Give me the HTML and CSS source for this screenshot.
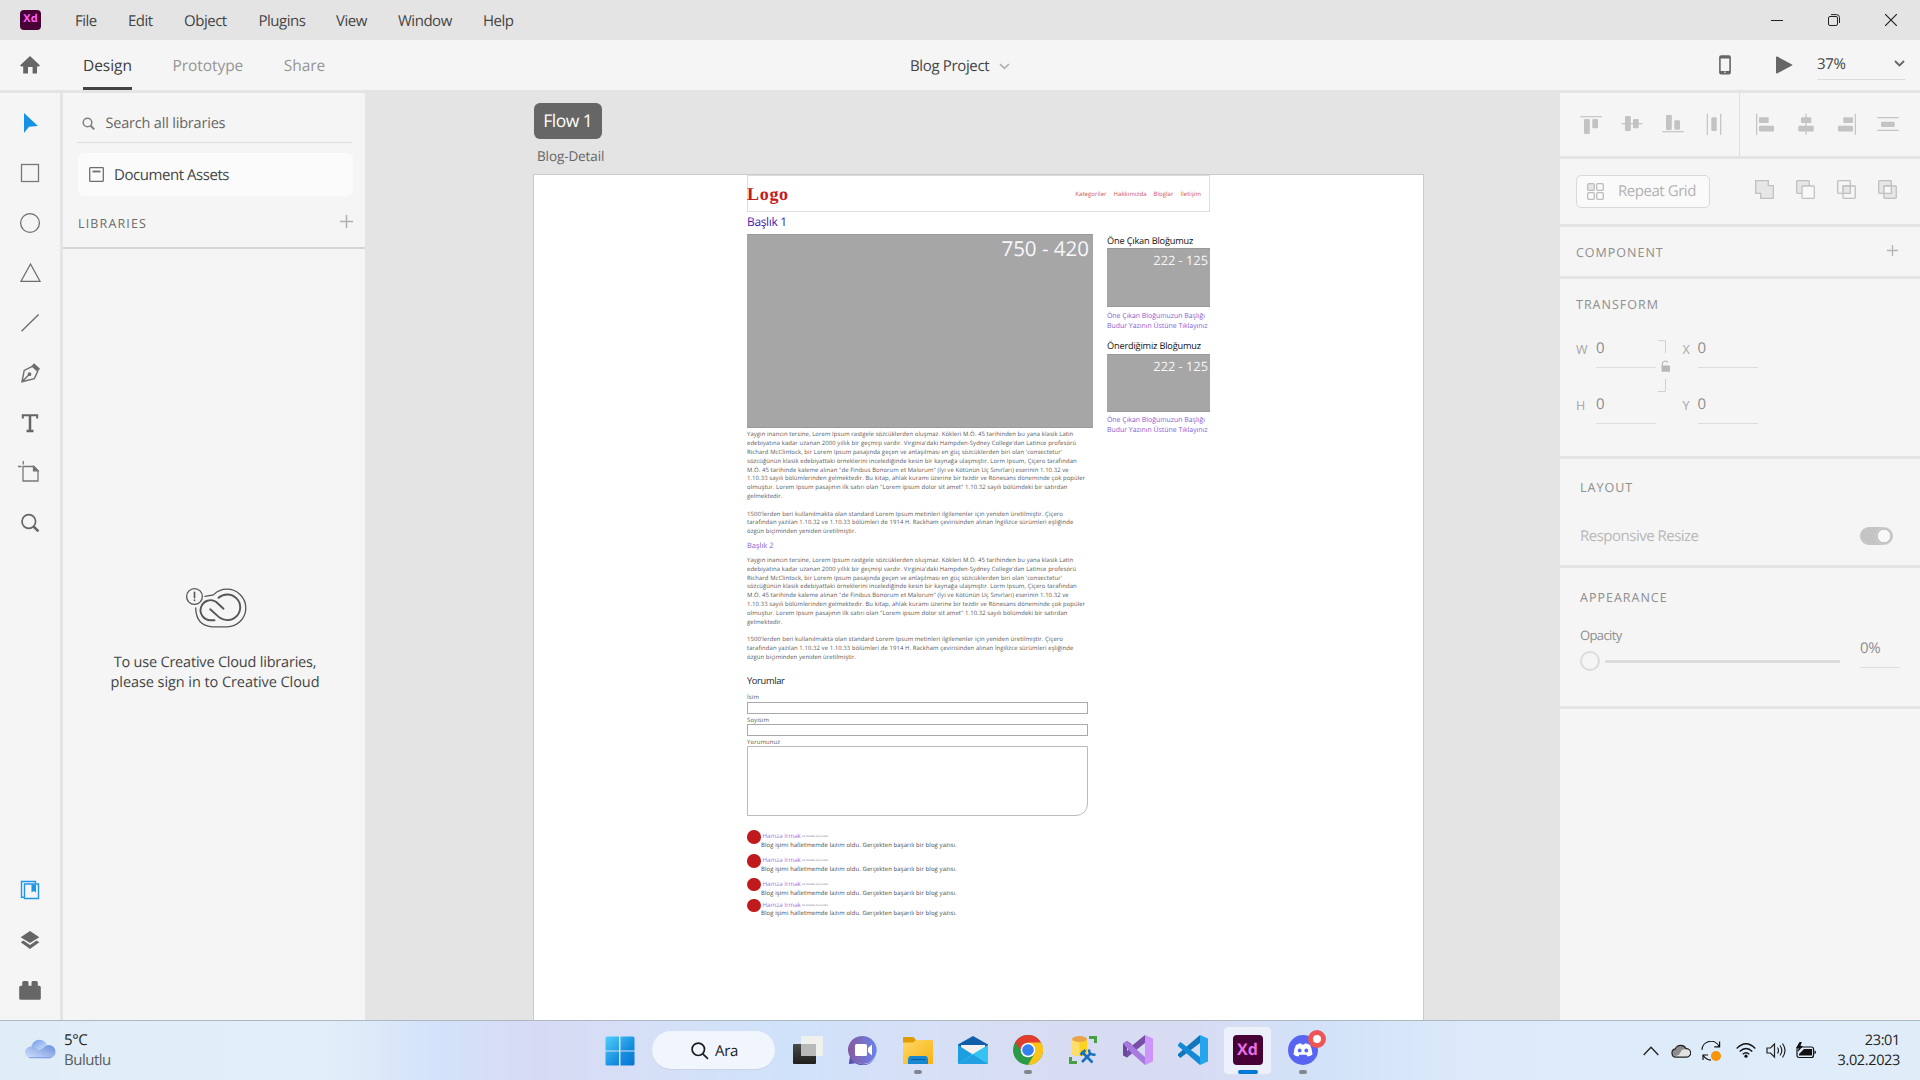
FILE: index.html
```html
<!DOCTYPE html>
<html lang="tr">
<head>
<meta charset="utf-8">
<title>Blog Project</title>
<link rel="stylesheet" href="styles.css">
</head>
<body>
<div class="app">
  <header class="titlebar">
    <div class="xd-logo">Xd</div>
    <nav class="menu"><span>File</span><span>Edit</span><span>Object</span><span>Plugins</span><span>View</span><span>Window</span><span>Help</span></nav>
    <div class="window-buttons">
      <svg width="12" height="12" viewBox="0 0 12 12"><path d="M0 6.500h12" stroke="#222" fill="none"/></svg>
      <svg width="12" height="12" viewBox="0 0 12 12" fill="none" stroke="#222"><rect x=".5" y="2.500" width="9" height="9" rx="1.500"/><path d="M3 .6h5.500a3 3 0 0 1 3 3V9"/></svg>
      <svg width="12" height="12" viewBox="0 0 12 12"><path d="M0 0l12 12M12 0L0 12" stroke="#222" stroke-width="1.200"/></svg>
    </div>
  </header>

  <div class="toolbar">
    <svg class="home" width="20" height="18" viewBox="0 0 20 18"><path d="M10 0l10 9.600-1.300 1H17V17.400h-4.400V11H8v6.400H3.200v-6.800H1.300L0 9.600z" fill="#666"/></svg>
    <div class="tabs"><span class="tab active">Design</span><span class="tab">Prototype</span><span class="tab">Share</span></div>
    <div class="project">Blog Project<svg width="11" height="7" viewBox="0 0 11 7"><path d="M1 1l4.500 4.400L10 1" fill="none" stroke="#b0b0b0" stroke-width="1.700"/></svg></div>
    <div class="preview">
      <svg width="12" height="20" viewBox="0 0 12 20"><rect x=".9" y="1" width="10.200" height="17.800" rx="1.200" fill="none" stroke="#666" stroke-width="1.600"/><path d="M1 2.200h10M1 17.300h10" stroke="#666" stroke-width="2.600"/><circle cx="6" cy="17.300" r=".8" fill="#f5f5f5"/></svg>
      <svg width="17" height="18" viewBox="0 0 17 18"><path d="M0 1.500Q0 0 1.400.6L16 8.500Q17 9 16 9.600L1.400 17.300Q0 18 0 16.600z" fill="#666"/></svg>
      <div class="zoom"><span>37%</span><svg width="11" height="7" viewBox="0 0 11 7"><path d="M1 1l4.500 4.400L10 1" fill="none" stroke="#666" stroke-width="1.900"/></svg></div>
    </div>
  </div>

  <main class="workspace">
    <aside class="tools">
      <div class="tool"><svg viewBox="0 0 30 30"><path d="M9 5v20l5-6.200 9-.8z" fill="#1592e6"/></svg></div>
      <div class="tool"><svg viewBox="0 0 30 30" fill="none" stroke="#777" stroke-width="1.300"><rect x="6.500" y="6.500" width="17" height="17"/></svg></div>
      <div class="tool"><svg viewBox="0 0 30 30" fill="none" stroke="#6e6e6e" stroke-width="1.300"><circle cx="15" cy="15" r="9.400"/></svg></div>
      <div class="tool"><svg viewBox="0 0 30 30" fill="none" stroke="#6e6e6e" stroke-width="1.300"><path d="M15.500 6L25 23.300H6z"/></svg></div>
      <div class="tool"><svg viewBox="0 0 30 30" fill="none" stroke="#6e6e6e" stroke-width="1.400"><path d="M6.500 23.300L23.600 6.500"/></svg></div>
      <div class="tool"><svg viewBox="0 0 30 30" fill="none" stroke="#6e6e6e" stroke-width="1.400"><path d="M7 23.700l2.200-11.200 8.200-4.200 5.300 5-3.400 7.300zL14.500 16.200"/><circle cx="14.500" cy="16.200" r="1.200" fill="#6e6e6e"/><path d="M17.800 6.600l6 5.600" stroke-width="3.800"/></svg></div>
      <div class="tool"><svg viewBox="0 0 30 30" fill="none" stroke="#666"><path d="M7.800 10.500V7.300h14.400v3.200" stroke-width="2"/><path d="M15 7v16M11.500 23.100h7" stroke-width="2.500"/></svg></div>
      <div class="tool"><svg class="up" viewBox="0 0 30 30" fill="none" stroke="#777" stroke-width="1.300"><path d="M8 9.500h11l4 4V24H8zM3 9.500h3.500M8.300 4v3.500"/><path d="M18.500 9.500v4.300H23z" fill="#666"/></svg></div>
      <div class="tool"><svg viewBox="0 0 30 30" fill="none" stroke="#666"><circle cx="13.800" cy="13.500" r="6.800" stroke-width="1.700"/><path d="M18.500 18.500l5 4.800" stroke-width="2.500"/></svg></div>
      <div class="tool first-bottom"><svg viewBox="0 0 30 30" fill="none" stroke="#1e96e8" stroke-width="1.400"><path d="M20.500 8.500v-2h-14v15.800h3"/><path d="M9.500 9h14v14.500h-14z"/><path d="M16.500 9.500h4.500v8l-2.200-1.500-2.300 1.500z" fill="#1e96e8" stroke="none"/></svg></div>
      <div class="tool"><svg viewBox="0 0 30 30" fill="#666"><path d="M15 6l9.300 6.200L15 18 5.700 12.200zM5.700 17.200L8.400 15.600 15 19.900l6.600-4.300 2.700 1.600L15 24z"/></svg></div>
      <div class="tool"><svg viewBox="0 0 30 30" fill="#666"><path d="M4.200 12.200q0-1.500 1.500-1.500h1.500V7.500q0-1.500 1.500-1.500h3.500q1.300 0 1.300 1.500v3.200h3V7.500q0-1.500 1.300-1.500h3.500q1.500 0 1.500 1.500v3.200h1.500q1.500 0 1.500 1.500v11q0 1.500-1.500 1.500H5.700q-1.500 0-1.500-1.500z"/></svg></div>
    </aside>

    <aside class="libraries">
      <div class="search"><svg width="13" height="13" viewBox="0 0 13 13" fill="none" stroke="#808080"><circle cx="5.500" cy="5.500" r="4.300" stroke-width="1.500"/><path d="M8.700 8.800l3.500 3.600" stroke-width="2"/></svg><span>Search all libraries</span></div>
      <div class="doc-assets"><svg width="15" height="15" viewBox="0 0 15 15" fill="none" stroke="#6e6e6e" stroke-width="1.300"><rect x=".7" y=".7" width="13.600" height="13.600" rx=".5"/><path d="M3.500 4.500h8" stroke-width="1.800"/></svg><span>Document Assets</span></div>
      <div class="lib-head"><span>LIBRARIES</span><svg width="13" height="13" viewBox="0 0 13 13"><path d="M6.500 0v13M0 6.500h13" stroke="#b0b0b0" stroke-width="1.500"/></svg></div>
      <div class="sign-in">
        <svg width="62" height="42" viewBox="0 0 62 42" fill="none" stroke="#555" stroke-linecap="round"><circle cx="9.500" cy="9.500" r="7.900" stroke-width="1.300"/><path d="M9.500 5.200v5.600M9.500 13.100v.4" stroke-width="1.600"/><path d="M20 9.300l8.500-1.400Q34 2.200 42 2.200A18.800 18.800 0 0 1 42 39.800H27Q11 38.500 10.700 21" stroke-width="1.300"/><path d="M38.500 21.700L31.300 15A10 10 0 1 0 25.500 33.200H29.500M25.200 22.300l9.300 8.300A13 12.800 0 1 0 33.500 10.800" stroke-width="1.900"/></svg>
        <p><span>To use Creative Cloud libraries,</span><br>please sign in to Creative Cloud</p>
      </div>
    </aside>

    <section class="canvas">
      <div class="flow-tag">Flow 1</div>
      <div class="board-name">Blog-Detail</div>
      <article class="board">
        <div class="page">
          <header class="page-head"><b>Logo</b><nav><span>Kategoriler</span><span>Hakkımızda</span><span>Bloglar</span><span>İletişim</span></nav></header>
          <div class="columns">
            <div class="post">
              <h1>Başlık 1</h1>
              <div class="hero">750 - 420</div>
              <p class="copy">Yaygın inancın tersine, Lorem Ipsum rastgele sözcüklerden oluşmaz. Kökleri M.Ö. 45 tarihinden bu yana klasik Latin<br>edebiyatına kadar uzanan 2000 yıllık bir geçmişi vardır. Virginia'daki Hampden-Sydney College'dan Latince profesörü<br>Richard McClintock, bir Lorem Ipsum pasajında geçen ve anlaşılması en güç sözcüklerden biri olan 'consectetur'<br>sözcüğünün klasik edebiyattaki örneklerini incelediğinde kesin bir kaynağa ulaşmıştır. Lorm Ipsum, Çiçero tarafından<br>M.Ö. 45 tarihinde kaleme alınan "de Finibus Bonorum et Malorum" (İyi ve Kötünün Uç Sınırları) eserinin 1.10.32 ve<br>1.10.33 sayılı bölümlerinden gelmektedir. Bu kitap, ahlak kuramı üzerine bir tezdir ve Rönesans döneminde çok popüler<br>olmuştur. Lorem Ipsum pasajının ilk satırı olan "Lorem ipsum dolor sit amet" 1.10.32 sayılı bölümdeki bir satırdan<br>gelmektedir.<br><br>1500'lerden beri kullanılmakta olan standard Lorem Ipsum metinleri ilgilenenler için yeniden üretilmiştir. Çiçero<br>tarafından yazılan 1.10.32 ve 1.10.33 bölümleri de 1914 H. Rackham çevirisinden alınan İngilizce sürümleri eşliğinde<br>özgün biçiminden yeniden üretilmiştir.</p>
              <h2>Başlık 2</h2>
              <p class="copy">Yaygın inancın tersine, Lorem Ipsum rastgele sözcüklerden oluşmaz. Kökleri M.Ö. 45 tarihinden bu yana klasik Latin<br>edebiyatına kadar uzanan 2000 yıllık bir geçmişi vardır. Virginia'daki Hampden-Sydney College'dan Latince profesörü<br>Richard McClintock, bir Lorem Ipsum pasajında geçen ve anlaşılması en güç sözcüklerden biri olan 'consectetur'<br>sözcüğünün klasik edebiyattaki örneklerini incelediğinde kesin bir kaynağa ulaşmıştır. Lorm Ipsum, Çiçero tarafından<br>M.Ö. 45 tarihinde kaleme alınan "de Finibus Bonorum et Malorum" (İyi ve Kötünün Uç Sınırları) eserinin 1.10.32 ve<br>1.10.33 sayılı bölümlerinden gelmektedir. Bu kitap, ahlak kuramı üzerine bir tezdir ve Rönesans döneminde çok popüler<br>olmuştur. Lorem Ipsum pasajının ilk satırı olan "Lorem ipsum dolor sit amet" 1.10.32 sayılı bölümdeki bir satırdan<br>gelmektedir.<br><br>1500'lerden beri kullanılmakta olan standard Lorem Ipsum metinleri ilgilenenler için yeniden üretilmiştir. Çiçero<br>tarafından yazılan 1.10.32 ve 1.10.33 bölümleri de 1914 H. Rackham çevirisinden alınan İngilizce sürümleri eşliğinde<br>özgün biçiminden yeniden üretilmiştir.</p>
              <h3>Yorumlar</h3>
              <div class="form">
                <span class="label">İsim</span><div class="field"></div>
                <span class="label">Soyisim</span><div class="field"></div>
                <span class="label">Yorumunuz</span><div class="field area"></div>
              </div>
              <div class="comments">
                <div class="comment"><i></i><div><span class="who">Hamza Irmak</span><small>02.02.2023 Perşembe</small><p>Blog işimi halletmemde lazım oldu. Gerçekten başarılı bir blog yazısı.</p></div></div>
                <div class="comment"><i></i><div><span class="who">Hamza Irmak</span><small>02.02.2023 Perşembe</small><p>Blog işimi halletmemde lazım oldu. Gerçekten başarılı bir blog yazısı.</p></div></div>
                <div class="comment short"><i></i><div><span class="who">Hamza Irmak</span><small>02.02.2023 Perşembe</small><p>Blog işimi halletmemde lazım oldu. Gerçekten başarılı bir blog yazısı.</p></div></div>
                <div class="comment"><i></i><div><span class="who">Hamza Irmak</span><small>02.02.2023 Perşembe</small><p>Blog işimi halletmemde lazım oldu. Gerçekten başarılı bir blog yazısı.</p></div></div>
              </div>
            </div>
            <div class="side">
              <h4>Öne Çıkan Bloğumuz</h4>
              <div class="thumb">222 - 125</div>
              <p>Öne Çıkan Bloğumuzun Başlığı<br>Budur Yazının Üstüne Tıklayınız</p>
              <h4 class="second">Önerdiğimiz Bloğumuz</h4>
              <div class="thumb">222 - 125</div>
              <p>Öne Çıkan Bloğumuzun Başlığı<br>Budur Yazının Üstüne Tıklayınız</p>
            </div>
          </div>
        </div>
      </article>
    </section>

    <aside class="inspector">
      <div class="panel align">
        <div class="group">
          <svg viewBox="0 0 30 30"><path d="M4.300 7.700h21.400"/><rect x="8" y="10" width="5.800" height="15" rx="1"/><rect x="16.300" y="10" width="5.700" height="9.300" rx="1"/></svg>
          <svg viewBox="0 0 30 30"><path d="M4.300 14.700h21.400"/><rect x="8" y="7" width="5.800" height="15" rx="1"/><rect x="16" y="10" width="5.700" height="9.300" rx="1"/></svg>
          <svg viewBox="0 0 30 30"><path d="M4.300 22.700h21.400"/><rect x="8" y="6" width="5.800" height="15" rx="1"/><rect x="16.300" y="11.300" width="5.700" height="9.400" rx="1"/></svg>
          <svg viewBox="0 0 30 30"><path d="M8.300 4.700V26M21.700 4.700V26"/><rect x="12.300" y="8.300" width="5.400" height="13.700" rx="1"/></svg>
        </div>
        <div class="group right">
          <svg viewBox="0 0 30 30"><path d="M6.700 4.700V26"/><rect x="9" y="8.300" width="9.700" height="5.700" rx="1"/><rect x="9" y="16.700" width="15" height="5.700" rx="1"/></svg>
          <svg viewBox="0 0 30 30"><path d="M15 4.700V26"/><rect x="10" y="8.300" width="10.300" height="5.700" rx="1"/><rect x="7.300" y="16.700" width="15.400" height="5.700" rx="1"/></svg>
          <svg viewBox="0 0 30 30"><path d="M23.300 4.700V26"/><rect x="11.300" y="8.300" width="9.700" height="5.700" rx="1"/><rect x="6" y="16.700" width="15" height="5.700" rx="1"/></svg>
          <svg viewBox="0 0 30 30"><path d="M4.300 8.700h21.400M4.300 21.300h21.400"/><rect x="8" y="12.700" width="13.700" height="5.400" rx="1"/></svg>
        </div>
      </div>
      <div class="panel repeat">
        <div class="repeat-btn"><svg width="17" height="17" viewBox="0 0 17 17" fill="none" stroke="#bcbcbc" stroke-width="1.300"><rect x=".7" y=".7" width="6.600" height="6.600" rx="1" fill="#e6e6e6"/><rect x="9.700" y=".7" width="6.600" height="6.600" rx="1"/><rect x=".7" y="9.700" width="6.600" height="6.600" rx="1"/><rect x="9.700" y="9.700" width="6.600" height="6.600" rx="1"/></svg>Repeat Grid</div>
        <div class="bools">
          <svg viewBox="0 0 19 19"><path d="M.7.7h12.600v5h5v12.600H5.700v-5h-5z" fill="#e6e6e6"/></svg>
          <svg viewBox="0 0 19 19"><rect x=".7" y=".7" width="12.600" height="12.600" rx=".8" fill="#e6e6e6"/><rect x="6" y="6" width="12.300" height="12.300" rx=".8" fill="#f8f8f8"/></svg>
          <svg viewBox="0 0 19 19"><rect x=".7" y=".7" width="12.600" height="12.600" rx=".8"/><rect x="6" y="6" width="12.300" height="12.300" rx=".8"/><path d="M6 6h7.300v7.300H6z" fill="#e6e6e6"/></svg>
          <svg viewBox="0 0 19 19"><rect x=".7" y=".7" width="12.600" height="12.600" rx=".8" fill="#e6e6e6"/><rect x="6" y="6" width="12.300" height="12.300" rx=".8" fill="#e6e6e6"/><path d="M6 6h7.300v7.300H6z" fill="#f8f8f8"/></svg>
        </div>
      </div>
      <div class="panel component"><span class="heading">COMPONENT</span><svg width="11" height="11" viewBox="0 0 11 11"><path d="M5.500 0v11M0 5.500h11" stroke="#b4b4b4" stroke-width="1.300"/></svg></div>
      <div class="panel transform">
        <div class="heading">TRANSFORM</div>
        <div class="fields">
          <div class="pair"><label>W</label><span class="value">0</span><label>H</label><span class="value">0</span></div>
          <svg class="link" width="14" height="54" viewBox="0 0 14 54" fill="none" stroke="#d0d0d0"><path d="M0 .7h7.500V13M7.500 39v12.500H0"/><path d="M4.300 27v-3a3 3 0 0 1 5.500-1.500" stroke="#b8b8b8" stroke-width="1.200"/><rect x="3.600" y="25.500" width="8.400" height="6.300" rx=".5" fill="#b8b8b8" stroke="none"/></svg>
          <div class="pair xy"><label>X</label><span class="value">0</span><label>Y</label><span class="value">0</span></div>
        </div>
      </div>
      <div class="panel layout"><div class="heading">LAYOUT</div><div class="resize"><span>Responsive Resize</span><div class="toggle"></div></div></div>
      <div class="panel appearance"><div class="heading">APPEARANCE</div>
        <div class="opacity"><div class="slide"><span>Opacity</span><div class="slider"><i></i><b></b></div></div><div class="percent">0%</div></div>
      </div>
      <div class="panel rest"></div>
    </aside>
  </main>

  <footer class="taskbar">
    <div class="weather">
      <svg width="31" height="20" viewBox="0 0 31 20"><defs><linearGradient id="wc" x1="0" y1="0" x2=".6" y2="1"><stop stop-color="#6d9ae8"/><stop offset="1" stop-color="#e2ecfc"/></linearGradient><linearGradient id="wd" x1="1" y1="0" x2="0" y2="1"><stop stop-color="#6a8ede"/><stop offset="1" stop-color="#d5e4fc"/></linearGradient></defs><circle cx="14.500" cy="9" r="8.300" fill="url(#wc)"/><path d="M6 7.500a6 6 0 1 0 0 12h18a6.700 6.700 0 1 0-5.500-10.800Q16 11 13 11 10 7.500 6 7.500z" fill="url(#wd)"/><path d="M4 18.600h22" stroke="#7e9fe6" stroke-width="1"/></svg>
      <div><p>5°C</p><p class="dim">Bulutlu</p></div>
    </div>
    <div class="apps">
      <svg class="start" width="30" height="30" viewBox="0 0 30 30"><defs><linearGradient id="ws" x1="0" y1="0" x2="1" y2="1"><stop stop-color="#51cffb"/><stop offset=".6" stop-color="#168edf"/><stop offset="1" stop-color="#0874d2"/></linearGradient></defs><path d="M.5 2q0-1.500 1.500-1.500h12v14H.5zM15.500.5h12.500q1.500 0 1.500 1.500v12.500h-14zM.5 15.500h13.500v14H2q-1.500 0-1.500-1.500zM15.500 15.500h14V28q0 1.500-1.500 1.500H15.500z" fill="url(#ws)"/></svg>
      <div class="ara"><svg width="18" height="18" viewBox="0 0 18 18" fill="none" stroke="#1c1c1c" stroke-width="1.700"><circle cx="7.300" cy="7.300" r="6.200"/><path d="M11.800 11.800l5.200 5"/></svg>Ara</div>
      <div class="app-btn"><svg viewBox="0 0 30 30"><defs><linearGradient id="tv" x1="0" y1="0" x2="0" y2="1"><stop stop-color="#4a4a48"/><stop offset="1" stop-color="#1f1f1e"/></linearGradient></defs><rect x="0" y="9" width="23" height="20" rx="1" fill="url(#tv)"/><rect x="8" y="1" width="22" height="20" rx="1" fill="#f0f0ef"/><path d="M8 9h15v12H8z" fill="#b9b9b9"/></svg></div>
      <div class="app-btn"><svg viewBox="0 0 30 30"><defs><linearGradient id="ch" x1="0" y1="0" x2="1" y2="0"><stop stop-color="#865a9f"/><stop offset="1" stop-color="#6b82ed"/></linearGradient></defs><path d="M15 1a14 14 0 1 1-6 26.800L1 29l1-7A14 14 0 0 1 15 1z" fill="url(#ch)"/><path d="M2 22a14 14 0 0 0 26-1 14 14 0 0 1-19 6.800L1 29z" fill="#5350bd"/><rect x="7" y="9" width="12" height="12" rx="1.500" fill="#fff"/><path d="M20 13l4-3.500v11L20 17z" fill="#fff"/></svg></div>
      <div class="app-btn running"><svg viewBox="0 0 30 30"><defs><linearGradient id="fe" x1="0" y1="0" x2="1" y2="1"><stop stop-color="#ffd766"/><stop offset="1" stop-color="#f8b313"/></linearGradient></defs><path d="M0 3q0-1 1-1h9.500L13 5v3H0z" fill="#df9c05"/><path d="M0 7.500h10L13 5h16q1 0 1 1v22q0 1-1 1H1q-1 0-1-1z" fill="url(#fe)"/><path d="M5 29v-4q0-4 3-4h14q3 0 3 4v4z" fill="#1687d2"/><path d="M8 24.500h14" stroke="#075a99"/></svg></div>
      <div class="app-btn"><svg viewBox="0 0 30 30"><path d="M0 9.500L15 1l15 8.500v5H0z" fill="#0f5ea8"/><path d="M3 10h24v12H3z" fill="#f4f2f0"/><path d="M0 10l17 11v8H1q-1 0-1-1z" fill="#1c9ee0"/><path d="M30 10L11.500 21 0 29h30z" fill="#35c4f2"/><path d="M15 19.500L30 29H0z" fill="#1a8cd8" opacity=".65"/></svg></div>
      <div class="app-btn running"><svg viewBox="0 0 30 30"><circle cx="15" cy="15" r="15" fill="#2b9a47"/><path d="M15 15L2 7.500A15 15 0 0 1 28 7.500z" fill="#e33b2e"/><path d="M15 7.500h13A15 15 0 0 1 15 30l6.500-11.200z" fill="#fcc419"/><path d="M2 7.500L8.500 18.800 15 7.500z" fill="#2b9a47"/><path d="M2 7.500h13v3L8 15z" fill="#e33b2e"/><circle cx="15" cy="15" r="7.300" fill="#fff"/><circle cx="15" cy="15" r="5.800" fill="#3480ee"/></svg></div>
      <div class="app-btn"><svg viewBox="0 0 30 30"><path d="M4 4v14q0 3 7.500 3t7.500-3V4z" fill="#ffd21e"/><path d="M4 4v14q0 3 7.500 3V4z" fill="#ffdf6b"/><ellipse cx="11.500" cy="4" rx="7.500" ry="3" fill="#e9a54c"/><path d="M21 2.500h6.500V8M2.500 22v5.500H9" fill="none" stroke="#47a046" stroke-width="3"/><path d="M14 27l9-9M13.500 16.500l11 11" stroke="#176fc1" stroke-width="2.600"/><path d="M21 14.500q0 6 6.500 5M12.500 20l5-5" stroke="#176fc1" stroke-width="2.500" fill="none"/></svg></div>
      <div class="app-btn"><svg viewBox="0 0 30 30"><path d="M0 8.500L4 6l4.500 3V17l-4.500 5.500-4-2z" fill="#6c479c"/><path d="M4 11v8l4-4z" fill="#d9dcf3"/><path d="M4 22.500L22 8V0L8.500 11 4 16z" fill="#7650a6"/><path d="M0 8.500L4 6l18 16v8L8.500 18 4 13z" fill="#a67adf"/><path d="M22 0l8 3.500v23L22 30z" fill="#cd94fb"/></svg></div>
      <div class="app-btn"><svg viewBox="0 0 30 30"><path d="M0 20.500L2.300 23 22 8V0L0 19z" fill="#1177bd"/><path d="M0 9.500L2.500 7 22 22v8L0 11z" fill="#148ad4"/><path d="M22 0l8 3.500v23L22 30z" fill="#25a5ee"/></svg></div>
      <div class="app-btn current"><div class="xd-logo big">Xd</div></div>
      <div class="app-btn running discord"><svg viewBox="0 0 30 30"><circle cx="15" cy="15" r="15" fill="#5865f2"/><path d="M8 10q3-1.700 5-1.700l.7 1.200h2.600l.7-1.200q2 0 5 1.700 2.300 4 2.500 9.500-2.500 1.800-5 2l-1-1.800h-7l-1 1.800q-2.500-.2-5-2Q5.700 14 8 10z" fill="#fff"/><circle cx="11.700" cy="15.500" r="1.900" fill="#5865f2"/><circle cx="18.300" cy="15.500" r="1.900" fill="#5865f2"/></svg><em></em></div>
    </div>
    <div class="tray">
      <svg width="16" height="10" viewBox="0 0 16 10"><path d="M.7 9L8 1.300 15.300 9" fill="none" stroke="#222" stroke-width="1.300"/></svg>
      <svg width="20" height="14" viewBox="0 0 20 14"><path d="M5 13.200a4.200 4.200 0 0 1-.7-8.300A6 6 0 0 1 15 4.600a4.300 4.300 0 0 1 .7 8.600z" fill="#e2e2e2"/><path d="M1 8.500Q2 5 5 5 7 1 10 1q3.300 0 5 4l-4 .8-3 5-3 1.200Q1 12 1 8.500z" fill="#8c8c8c"/><path d="M5 13.200a4.200 4.200 0 0 1-.7-8.300A6 6 0 0 1 15 4.600a4.300 4.300 0 0 1 .7 8.600z" fill="none" stroke="#222" stroke-width="1.200"/></svg>
      <svg width="20" height="20" viewBox="0 0 20 20" fill="none" stroke="#111" stroke-width="1.200"><path d="M1 8.800A9 9 0 0 1 18 5.200M18.600.5v5.300h-5.300M2 19v-5h5M2.200 14.300Q5 19 10 19.200"/><circle cx="15" cy="15" r="5" fill="#f7940a" stroke="none"/></svg>
      <svg width="20" height="15" viewBox="0 0 20 15" fill="none" stroke="#111" stroke-width="1.300"><path d="M.7 5.500Q10-4 19.300 5.500M3.700 8.500q6.300-6 12.600 0M6.700 11.200q3.300-3 6.600 0"/><circle cx="10" cy="13.200" r="1.600" fill="#111" stroke="none"/></svg>
      <svg width="20" height="17" viewBox="0 0 20 17" fill="none" stroke="#222" stroke-width="1.200"><path d="M1 6h3.500l4-4v13l-4-4H1zM11.500 5.500q2 3 0 6M14 3.500q3.600 5 0 10M16.500 1.500q5 7 0 14"/></svg>
      <svg width="20" height="17" viewBox="0 0 20 17"><rect x="1" y="5" width="16.500" height="10.500" rx="2" fill="none" stroke="#111" stroke-width="1.200"/><path d="M8 7h8v6.500H3V12zM18.500 8.300q1.500.3 1.500 2t-1.500 2zM3.500 0L0 6h2.500L1.800 10 7 4H4.500L5.800 0z" fill="#111"/></svg>
      <div class="clock">23:01<br>3.02.2023</div>
    </div>
  </footer>
</div>
</body>
</html>
```
FILE: styles.css
```css
* { box-sizing: border-box; margin: 0; padding: 0; }
body {
  width: 1920px; height: 1080px; overflow: hidden;
  font-family: "Open Sans", "Noto Sans", sans-serif;
  font-size: 15px; color: #444; background: #e4e4e4;
  letter-spacing: -0.35px; white-space: nowrap;
  text-rendering: geometricPrecision;
}
svg { display: block; flex: none; }
.app { display: grid; grid-template-rows: 40px 50px 930px 60px; height: 1080px; }

/* Title bar */
.titlebar { display: flex; align-items: center; padding: 0 23px 0 20px; }
.xd-logo { width: 21px; height: 20px; border-radius: 4px; background: #470137; color: #ff61f6; font-size: 11px; font-weight: 700; line-height: 18px; text-align: center; letter-spacing: 0; }
.menu { display: grid; grid-template-columns: 53px 56px 74.500px 77.500px 62px 85px auto; margin: 2px 0 0 34px; line-height: 40px; letter-spacing: -.48px; }
.window-buttons { display: flex; gap: 45px; margin-left: auto; }

/* Mode toolbar */
.toolbar { display: grid; grid-template-columns: 83px 827px 809px 1fr; align-items: center; background: #f5f5f5; }
.home { margin-left: 20px; }
.tabs { display: flex; height: 50px; line-height: 51px; font-size: 15.500px; color: #959595; letter-spacing: -.05px; }
.tab { margin-right: 40.500px; }
.tab.active { color: #3c3c3c; box-shadow: inset 0 -3px #444; }
.project { display: flex; align-items: center; gap: 10px; line-height: 24px; padding-top: 2px; letter-spacing: -.35px; }
.preview { display: flex; align-items: center; gap: 45px; }
.zoom { display: flex; align-items: center; justify-content: space-between; width: 88px; height: 30px; margin: 0 0 1px -21px; padding-bottom: 1px; border-bottom: 1px solid #dcdcdc; }

.workspace { display: grid; grid-template-columns: 60px 3px 302px 1195px 360px; grid-template-rows: 927px; border-top: 3px solid #e4e4e4; overflow: hidden; }
.tools { grid-column: 1; display: flex; flex-direction: column; padding: 5px 0; background: #f5f5f5; }
.tool { height: 50px; display: grid; place-items: center; }
.tool svg { width: 30px; height: 30px; }
.tool .up { margin-top: -3px; }
.first-bottom { margin-top: auto; }

/* Libraries */
.libraries { grid-column: 3; background: #f5f5f5; display: flex; flex-direction: column; }
.search { display: flex; align-items: center; gap: 10.500px; height: 50px; margin: 0 13px 0 14px; padding: 12px 0 0 5px; border-bottom: 1px solid #dedede; color: #666; font-size: 14.500px; letter-spacing: -.19px; }
.doc-assets { display: flex; align-items: center; gap: 10px; height: 43px; margin: 10px 12px 0 15px; padding-left: 11px; border-radius: 6px; background: #fbfbfb; letter-spacing: -.45px; }
.lib-head { display: flex; align-items: center; justify-content: space-between; height: 53px; padding: 0 12px 0 15px; border-bottom: 2px solid #d5d5d5; font-size: 12.500px; letter-spacing: 1.150px; color: #6c6c6c; }
.lib-head span { padding-top: 3.500px; }
.sign-in { margin-top: 338px; display: flex; flex-direction: column; align-items: center; text-align: center; line-height: 20px; gap: 24px; }
.sign-in svg { margin-left: 4px; }
.sign-in p { margin-left: 2px; font-size: 14.500px; letter-spacing: -.07px; }
.sign-in p span { letter-spacing: -.2px; }

/* Artboard canvas */
.canvas { grid-column: 4; padding: 10px 0 0 168px; overflow: hidden; }
.flow-tag { width: 68px; height: 36px; margin-left: .8px; border-radius: 6px; background: #666; color: #fff; font-size: 17.500px; line-height: 37px; text-align: center; letter-spacing: -.5px; }
.board-name { height: 35px; padding-left: 4px; font-size: 13.500px; line-height: 34px; color: #666; letter-spacing: -.1px; }
.board { width: 891px; height: 900px; border: 1px solid #cbcbcb; background: #fff; }
.page { width: 463px; margin-left: 213px; }
.page-head { display: flex; align-items: center; justify-content: space-between; height: 37px; border: 1px solid #ddd; color: #c41c1c; }
.page-head b { margin-left: -1px; font: 700 18px/36px "Liberation Serif", serif; letter-spacing: .7px; }
.page-head nav { display: flex; gap: 7px; padding-right: 8px; font-size: 6px; letter-spacing: .05px; opacity: .8; }
.columns { display: grid; grid-template-columns: 346px 103px; column-gap: 14px; }
h1 { height: 21.500px; font-size: 12px; font-weight: 400; line-height: 20.700px; color: #4a22ae; }
.hero { height: 194px; background: #a6a6a6; border: 1px solid #999; border-width: 1px 0; color: #f7f7fc; font-size: 20.500px; line-height: 28px; text-align: right; padding-right: 4px; letter-spacing: 0; }
.copy { padding-top: 2.900px; font-size: 5.920px; line-height: 8.800px; letter-spacing: .09px; color: #555; }
h2 { height: 17.200px; font-size: 7.500px; font-weight: 400; line-height: 20.200px; letter-spacing: 0; color: #8662d0; }
h3 { margin-top: 11.800px; font-size: 9.300px; font-weight: 400; line-height: 15.300px; height: 13.300px; letter-spacing: -.35px; color: #222; }
.form { padding-top: 5px; font-size: 5.920px; letter-spacing: .14px; color: #555; }
.label { display: block; height: 10.400px; line-height: 13px; }
.label:first-child { height: 10px; line-height: 11px; }
.field { width: 340.500px; height: 12px; border: 1px solid #aaa; }
.area { height: 69.500px; border-color: #bbb; border-bottom-right-radius: 12px; }
.comments { padding-top: 14.500px; }
.comment { display: flex; height: 23.700px; letter-spacing: .12px; }
.comment.short { height: 20.700px; }
.comment i { width: 13.500px; height: 13.500px; border-radius: 50%; background: #c01a1c; }
.comment div { padding: 1px 0 0 .5px; line-height: 9px; height: 20px; }
.comment .who { display: inline-block; height: 9px; width: 41px; padding-left: 1.500px; font-size: 6.200px; letter-spacing: 0; color: #9a77e0; vertical-align: top; }
.comment small { display: inline-block; font-size: 2.600px; line-height: 9px; letter-spacing: 0; color: #777; vertical-align: top; padding-top: 1px; height: 9px; }
.comment p { font-size: 5.920px; line-height: 9.500px; color: #444; margin-top: .9px; }
.side { padding-top: 24px; }
.side h4 { height: 12px; font-size: 9.200px; font-weight: 400; line-height: 10px; color: #111; letter-spacing: -.17px; }
.side h4.second { margin-top: 9px; height: 13px; }
.thumb { height: 59px; background: #a6a6a6; border: 1px solid #999; border-width: 1px 0; color: #f7f7fc; text-align: right; padding-right: 2px; font-size: 12.800px; line-height: 23px; letter-spacing: 0; }
.side p { padding-top: 4.500px; font-size: 6.920px; line-height: 10px; letter-spacing: 0; color: #8260d4; }
.second + .thumb { height: 58px; }
.second + .thumb + p { padding-top: 4px; }

/* Property inspector */
.inspector { grid-column: 5; color: #8e8e8e; overflow: hidden; }
.panel { background: #f5f5f5; margin-bottom: 3px; }
.heading { font-size: 12.500px; letter-spacing: 1px; line-height: 18px; }
.align { display: flex; height: 63px; }
.group { display: flex; gap: 11px; width: 180px; padding: 16px 0 0 16px; border-right: 1px solid #dedede; }
.group.right { padding-left: 9.500px; border: 0; }
.group svg { width: 30px; height: 30px; fill: #c3c3c3; }
.group path { stroke: #c3c3c3; stroke-width: 1.200; }
.repeat { display: flex; height: 65px; padding: 16px 0 0 16px; }
.repeat-btn { display: flex; align-items: center; gap: 14px; width: 134px; height: 33px; padding: 0 0 1px 10px; border: 1px solid #d9d9d9; border-radius: 5px; background: #fafafa; color: #b2b2b2; letter-spacing: -.45px; }
.bools { display: flex; gap: 22px; padding: 5px 0 0 45px; }
.bools svg { width: 19px; height: 19px; fill: none; stroke: #c0c0c0; stroke-width: 1.300; }
.component { display: flex; justify-content: space-between; height: 49px; padding: 17px 22px 0 16px; }
.component svg { margin-top: 1px; }
.transform { height: 177px; padding: 17px 0 0 16px; }
.fields { display: flex; margin-top: 21px; }
.pair { display: grid; grid-template-columns: 20px 60px; grid-template-rows: 34px 34px; row-gap: 22px; margin-top: -1px; }
.pair.xy { grid-template-columns: 15px 60px; margin-left: 10.500px; }
.pair label { font-size: 12.500px; line-height: 31px; color: #a5a5a5; }
.value { border-bottom: 1px solid #ddd; line-height: 29px; }
.link { margin: 5px 0 0 2px; }
.layout { height: 106px; padding: 20px 0 0 20px; }
.resize { display: flex; justify-content: space-between; align-items: center; margin: 29px 27px 0 0; color: #b8b8b8; letter-spacing: -.5px; }
.toggle { width: 33px; height: 18px; border-radius: 9px; background: radial-gradient(circle at 24px 9px, #f8f8f8 6px, #c4c4c4 6.500px, #c4c4c4 8px, #d0d0d0 8.500px, #c4c4c4 9px); }
.appearance { height: 138px; padding: 21px 20px 0 20px; }
.opacity { display: flex; justify-content: space-between; margin-top: 16px; }
.slide span { display: block; font-size: 13px; line-height: 24px; letter-spacing: -.6px; }
.slider { display: flex; align-items: center; gap: 5px; margin-top: 4px; }
.slider i { width: 20px; height: 20px; border: 2px solid #dcdcdc; border-radius: 50%; }
.slider b { width: 235px; height: 3px; background: #dcdcdc; }
.percent { width: 40px; height: 45px; padding-top: 8px; border-bottom: 1px solid #ddd; line-height: 34px; }
.rest { height: 400px; }

/* Taskbar */
.taskbar { display: grid; grid-template-columns: 600px 1040px 280px; border-top: 1px solid #adb8c5; background: linear-gradient(90deg, #e0edf6, #e2eef8 17%, #d3e2fa 23%, #d8daf4 28%, #d5e0f7 34%, #d0e2fa 41%, #d6e0f6 48%, #d8dcf2 56%, #d7dcf3 62%, #d2e2f8 69%, #dceafa 77%, #e0edf9); color: #222; }
.weather { display: flex; padding: 18px 0 0 25px; gap: 8px; line-height: 20px; }
.weather div { margin-top: -9px; }
.weather .dim { color: #585c62; letter-spacing: -.5px; }
.apps { display: flex; padding-left: 4.500px; }
.start { margin-top: 15px; }
.ara { display: flex; align-items: center; justify-content: center; gap: 6px; width: 123px; height: 38px; margin: 10px 5px 0 17.500px; padding: 1px 0 0 2px; border-radius: 19px; background: #f1f5fd; box-shadow: 0 1px #ccd3e4; }
.app-btn { position: relative; width: 55px; display: grid; place-items: start center; padding-top: 14px; }
.app-btn svg { width: 30px; height: 30px; }
.running::after { content: ""; position: absolute; bottom: 6px; left: 23.500px; width: 8px; height: 4px; border-radius: 2px; background: #82868f; }
.current { width: 49px; height: 49px; margin: 5px 3px; padding-top: 8px; border-radius: 5px; background: #ebf0fb; border: 1px solid #dbe0ee; }
.current::after { content: ""; position: absolute; bottom: 0; left: 13.500px; width: 20px; height: 4px; border-radius: 2px; background: #0078d7; }
.xd-logo.big { width: 30px; height: 30px; border-radius: 4px; font-size: 16px; line-height: 29px; color: #ea6ee8; }
.discord em { position: absolute; top: 9px; right: 4px; width: 18px; height: 18px; border: 5px solid #ee5656; border-radius: 50%; background: #fff; }
.tray { display: grid; grid-template-columns: 28px 30px 35px 30px 30px 28px 1fr; align-items: center; padding: 0 20px 0 3px; }
.clock { text-align: right; line-height: 20px; font-size: 14.500px; }
```
